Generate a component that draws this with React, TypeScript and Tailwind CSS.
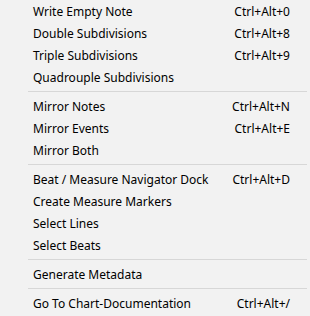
const groups: { label: string; shortcut?: string }[][] = [
  [
    { label: 'Write Empty Note', shortcut: 'Ctrl+Alt+0' },
    { label: 'Double Subdivisions', shortcut: 'Ctrl+Alt+8' },
    { label: 'Triple Subdivisions', shortcut: 'Ctrl+Alt+9' },
    { label: 'Quadrouple Subdivisions' },
  ],
  [
    { label: 'Mirror Notes', shortcut: 'Ctrl+Alt+N' },
    { label: 'Mirror Events', shortcut: 'Ctrl+Alt+E' },
    { label: 'Mirror Both' },
  ],
  [
    { label: 'Beat / Measure Navigator Dock', shortcut: 'Ctrl+Alt+D' },
    { label: 'Create Measure Markers' },
    { label: 'Select Lines' },
    { label: 'Select Beats' },
  ],
  [{ label: 'Generate Metadata' }],
  [{ label: 'Go To Chart-Documentation', shortcut: 'Ctrl+Alt+/' }],
];

export default function App() {
  return (
    <div
      className="w-[310px] h-[316px] bg-[#f2f2f2] text-black text-[12px] overflow-hidden"
      style={{ fontFamily: '"Segoe UI", "Noto Sans", sans-serif' }}
    >
      {groups.map((group, gi) => (
        <div key={gi}>
          {gi > 0 && (
            <div className="h-[7px] flex items-center pl-[28px] pr-[3px]">
              <div className="h-px w-full bg-[#d7d7d7]" />
            </div>
          )}
          {group.map((item) => (
            <div key={item.label} className="h-[22px] flex items-center pt-[2px] pl-[33px] pr-[20px]">
              <span className="flex-1 whitespace-nowrap">{item.label}</span>
              {item.shortcut && <span className="whitespace-nowrap">{item.shortcut}</span>}
            </div>
          ))}
        </div>
      ))}
    </div>
  );
}
